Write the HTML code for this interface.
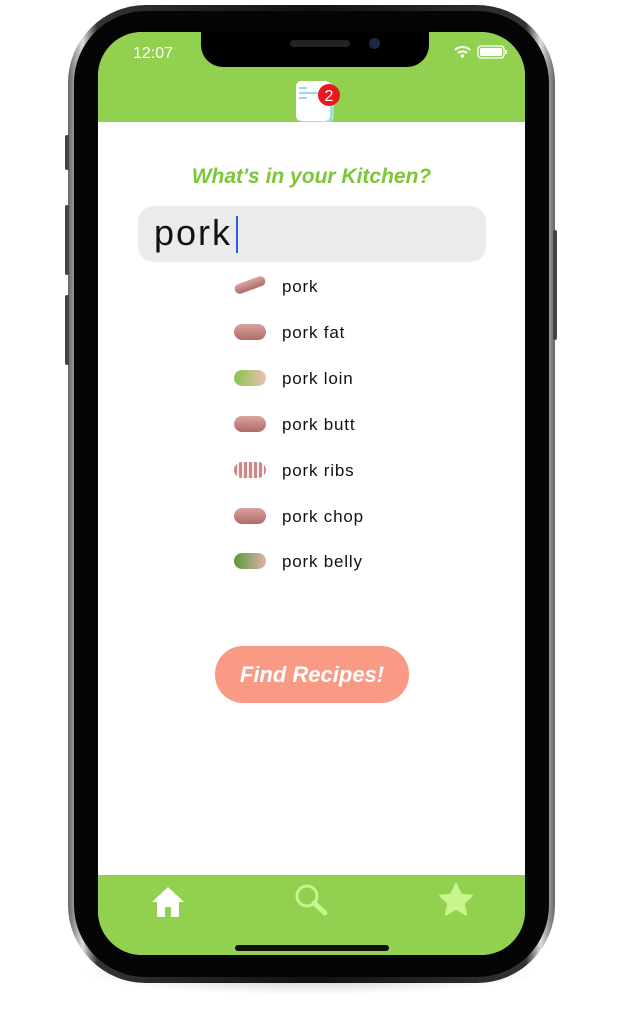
<!DOCTYPE html>
<html><head><style>
body{margin:0;width:622px;height:1009px;background:#fff;position:relative;overflow:hidden;font-family:"Liberation Sans",sans-serif}
.shadow{position:absolute;left:80px;top:950px;width:460px;height:45px;border-radius:50%;background:radial-gradient(ellipse,rgba(0,0,0,.25),rgba(0,0,0,0) 70%)}
.outer{position:absolute;left:68px;top:5px;width:487px;height:978px;border-radius:78px;background:linear-gradient(90deg,#666,#ddd 3%,#333 6%,#111 50%,#333 94%,#ddd 97%,#666);}
.bezel{position:absolute;left:74px;top:11px;width:475px;height:966px;border-radius:72px;background:#050505}
.btn{position:absolute;background:#444;border-radius:2px;width:4px}
.screen{position:absolute;left:98px;top:32px;width:427px;height:923px;border-radius:44px;background:#fff;overflow:hidden}
.top{position:absolute;left:0;top:0;width:427px;height:90px;background:#92d050}
.notch{position:absolute;left:103px;top:0;width:228px;height:35px;background:#000;border-radius:0 0 22px 22px}
.bot{position:absolute;left:0;top:843px;width:427px;height:80px;background:#92d050}
.time{position:absolute;left:35px;top:13px;color:#fff;font-size:16px}
.title{position:absolute;left:0;width:427px;top:133px;text-align:center;color:#7cc736;font-weight:bold;font-style:italic;font-size:21px}
.search{position:absolute;left:40px;top:174px;width:348px;height:56px;border-radius:16px;background:#ebebeb}
.search span{position:absolute;left:16px;top:6px;font-size:36px;color:#111;letter-spacing:2px}
.caret{position:absolute;left:98px;top:10px;width:2px;height:37px;background:#2a5cf0}
.item{position:absolute;left:184px;font-size:17px;color:#111;letter-spacing:.8px}
.ic{position:absolute;left:136px;width:32px;height:16px;border-radius:8px;background:linear-gradient(#d9a3a0,#b06a68)}
.find{position:absolute;left:117px;top:614px;width:194px;height:57px;border-radius:28px;background:#f99a85;color:#fff;font-weight:bold;font-style:italic;font-size:22px;text-align:center;line-height:57px}
</style></head><body>
<div class="shadow"></div>
<div class="outer"></div>
<div class="btn" style="left:65px;top:135px;height:35px"></div>
<div class="btn" style="left:65px;top:205px;height:70px"></div>
<div class="btn" style="left:65px;top:295px;height:70px"></div>
<div class="btn" style="left:553px;top:230px;height:110px"></div>
<div class="bezel"></div>
<div class="screen">
 <div class="top"></div>
 <div class="notch"><div style="position:absolute;left:89px;top:8px;width:60px;height:7px;border-radius:4px;background:#222"></div><div style="position:absolute;left:168px;top:6px;width:11px;height:11px;border-radius:50%;background:#1a2a44"></div></div>
 <div class="time">12:07</div>
 <svg style="position:absolute;left:355px;top:12px" width="60" height="16" viewBox="0 0 60 16"><path d="M2 6a11 11 0 0 1 15 0M5 9a7 7 0 0 1 9 0" stroke="#fff" stroke-width="2" fill="none"/><circle cx="9.5" cy="12" r="1.8" fill="#fff"/><rect x="25" y="2" width="26" height="12" rx="3" fill="none" stroke="#fff" stroke-width="1.3"/><rect x="27" y="4" width="22" height="8" rx="1.5" fill="#fff"/><rect x="52" y="6" width="2" height="4" fill="#fff"/></svg>
 <svg style="position:absolute;left:196px;top:46px" width="50" height="44"><rect x="5" y="4" width="35" height="40" rx="5" fill="#a8dde0"/><rect x="2" y="3" width="34" height="40" rx="5" fill="#fff"/><path d="M5 10h8M5 15h31M5 20h8" stroke="#9fd8dc" stroke-width="2"/><circle cx="35" cy="17" r="11" fill="#e8191e"/><text x="35" y="23" font-size="16" fill="#fff" text-anchor="middle" font-family="Liberation Sans">2</text></svg>
 <div class="title">What's in your Kitchen?</div>
 <div class="search"><span>pork</span><div class="caret"></div></div>
 <div class="ic" style="top:248px;height:10px;transform:rotate(-20deg)"></div><div class="item" style="top:245px">pork</div>
 <div class="ic" style="top:292px"></div><div class="item" style="top:291px">pork fat</div>
 <div class="ic" style="top:338px;background:linear-gradient(90deg,#8bc34a,#e8c0b8)"></div><div class="item" style="top:337px">pork loin</div>
 <div class="ic" style="top:384px"></div><div class="item" style="top:383px">pork butt</div>
 <div class="ic" style="top:430px;background:repeating-linear-gradient(90deg,#c88,#c88 3px,#eee 3px,#eee 5px)"></div><div class="item" style="top:429px">pork ribs</div>
 <div class="ic" style="top:476px"></div><div class="item" style="top:475px">pork chop</div>
 <div class="ic" style="top:521px;background:linear-gradient(90deg,#5a9a3a,#e0b0a8)"></div><div class="item" style="top:520px">pork belly</div>
 <div class="find">Find Recipes!</div>
 <div class="bot"></div>
 <svg style="position:absolute;left:52px;top:853px" width="36" height="34" viewBox="0 0 36 34"><path d="M18 2L2 17h5v15h8v-10h6v10h8V17h5z" fill="#fff"/></svg>
 <svg style="position:absolute;left:196px;top:851px" width="36" height="36"><circle cx="13" cy="13" r="10" fill="none" stroke="#c9f58f" stroke-width="3"/><path d="M20 20l11 10" stroke="#c9f58f" stroke-width="5" stroke-linecap="round"/></svg>
 <svg style="position:absolute;left:340px;top:850px" width="36" height="36" viewBox="0 0 24 24"><path d="M12 1.5l3.2 7 7.3.7-5.5 4.9 1.6 7.4L12 17.7 5.4 21.5 7 14.1 1.5 9.2l7.3-.7z" fill="#c9f58f" stroke="#c9f58f" stroke-linejoin="round" stroke-width="1.5"/></svg>
 <div style="position:absolute;left:137px;top:913px;width:154px;height:6px;border-radius:3px;background:#111"></div>
</div>
</body></html>
